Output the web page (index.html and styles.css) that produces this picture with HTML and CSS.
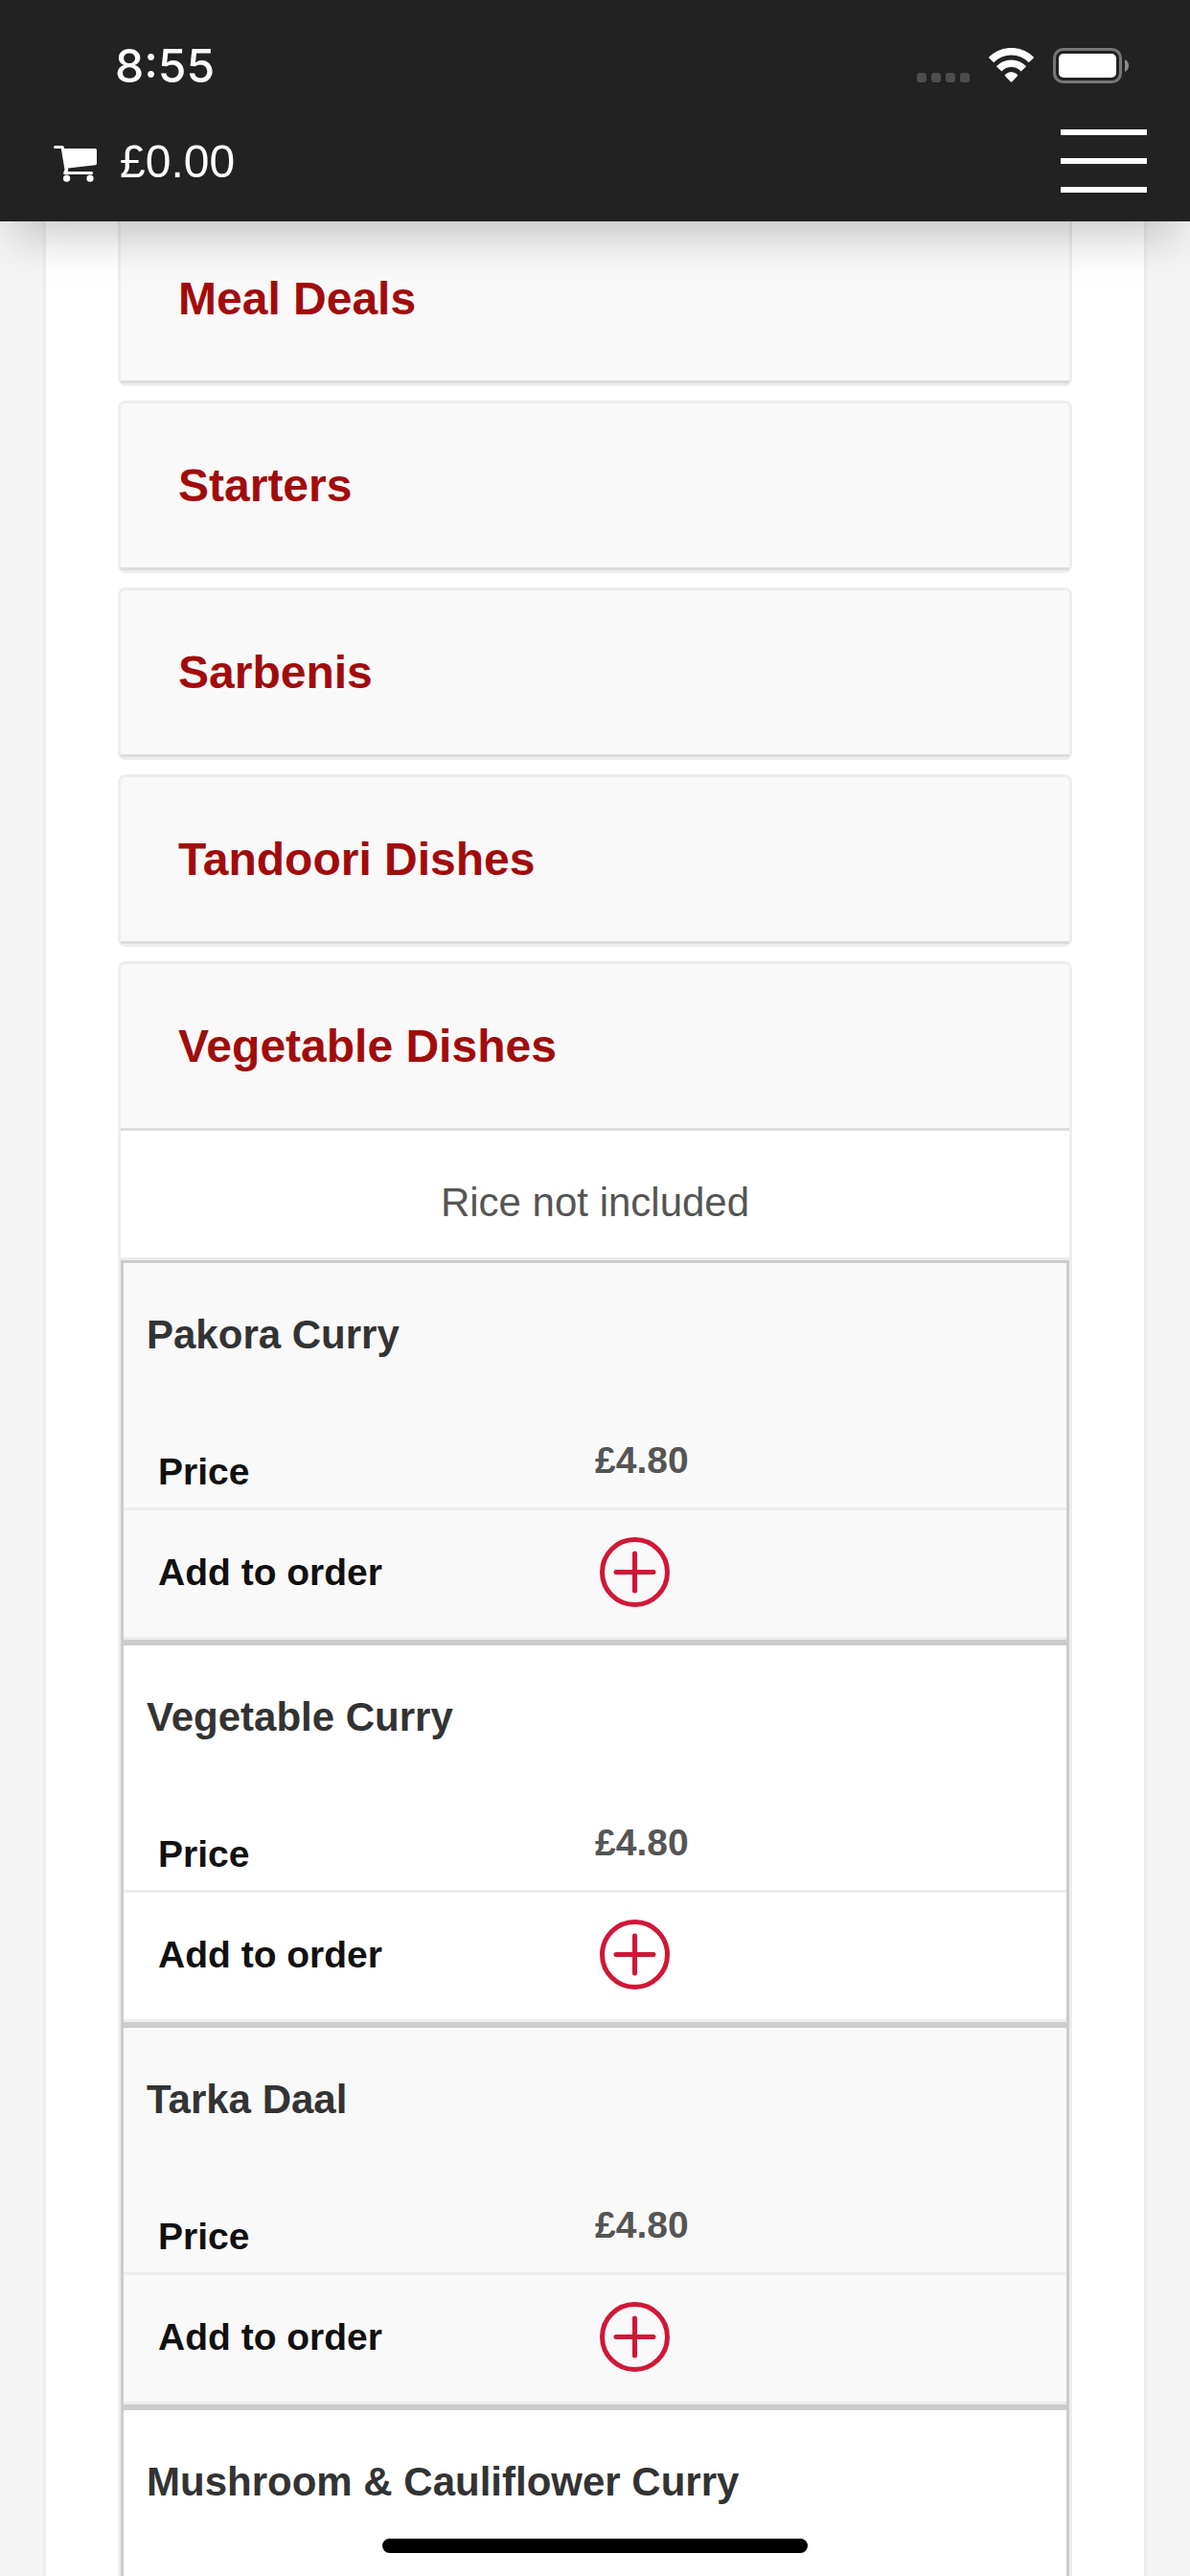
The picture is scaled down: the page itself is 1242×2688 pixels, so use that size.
FILE: index.html
```html
<!DOCTYPE html>
<html lang="en">
<head>
  <meta charset="UTF-8">
  <meta name="viewport" content="width=device-width, initial-scale=1.0">
  <title>Order Online</title>
  <link rel="stylesheet" href="styles.css">
</head>
<body>
  <header class="header">
    <div class="status">
      <span class="time">8:55</span>
      <div class="status-icons">
        <svg width="55" height="11" viewBox="0 0 55 11" fill="#4d4d4d">
          <rect width="10" height="10" rx="3"/>
          <rect x="15" width="10" height="10" rx="3"/>
          <rect x="30" width="10" height="10" rx="3"/>
          <rect x="45" width="10" height="10" rx="3"/>
        </svg>
        <svg width="47" height="37" viewBox="0 0 47 37" fill="none" stroke="#fff" stroke-width="7.6">
          <path d="M2.5 12.7A29 29 0 0 1 44.5 12.7"/>
          <path d="M10.6 21.9A17.6 17.6 0 0 1 36.4 21.9"/>
          <path d="M17.2 29.4Q16.2 28.4 17.3 27.5Q23.5 22.3 29.7 27.5Q30.8 28.4 29.8 29.4L24.3 35.3Q23.5 36 22.7 35.3Z" fill="#fff" stroke="none"/>
        </svg>
        <svg width="79" height="37" viewBox="0 0 79 37">
          <rect x="1.5" y="1.5" width="69" height="34" rx="9" fill="none" stroke="#767676" stroke-width="3"/>
          <rect x="6" y="6" width="60" height="25" rx="5" fill="#fff"/>
          <path d="M75 12Q79 14 79 18.5Q79 23 75 25Z" fill="#8a8a8a"/>
        </svg>
      </div>
    </div>
    <nav class="nav">
      <a class="cart" href="#cart">
        <svg width="45" height="44" viewBox="0 -6 45 44" fill="#fff">
          <path d="M1.5 0H9Q10.7 0 10.9 1.7L11.1 3H43.5Q45 3 45 4.5V18.5Q45 20 43.5 20.2L15 23.4L15.3 25Q15.3 26 14.6 27H40Q41 27 41 28.5Q41 30 40 30H11.5Q9.8 30 10.2 28.5L11.5 25L7.8 3H1.5Q0 3 0 1.5Q0 0 1.5 0Z"/>
          <circle cx="13.6" cy="34.2" r="3.6"/>
          <circle cx="38" cy="34.2" r="3.6"/>
        </svg>
        <span>£0.00</span>
      </a>
      <button class="menu-button" type="button" aria-label="Menu">
        <span></span>
        <span></span>
        <span></span>
      </button>
    </nav>
  </header>

  <main class="content">
    <section class="category">
      <h2>Meal Deals</h2>
    </section>
    <section class="category">
      <h2>Starters</h2>
    </section>
    <section class="category">
      <h2>Sarbenis</h2>
    </section>
    <section class="category">
      <h2>Tandoori Dishes</h2>
    </section>
    <section class="category open">
      <h2>Vegetable Dishes</h2>
      <p class="note">Rice not included</p>
      <article class="item">
        <h3>Pakora Curry</h3>
        <table>
          <tr class="price">
            <th scope="row">Price</th>
            <td>£4.80</td>
          </tr>
          <tr class="add">
            <th scope="row">Add to order</th>
            <td>
              <button type="button" class="add-button" aria-label="Add Pakora Curry">
                <svg width="73" height="73" viewBox="0 0 73 73"><circle cx="36.5" cy="36.5" r="34"/><path d="M17 36.5H56M36.5 17V56"/></svg>
              </button>
            </td>
          </tr>
        </table>
      </article>
      <article class="item">
        <h3>Vegetable Curry</h3>
        <table>
          <tr class="price">
            <th scope="row">Price</th>
            <td>£4.80</td>
          </tr>
          <tr class="add">
            <th scope="row">Add to order</th>
            <td>
              <button type="button" class="add-button" aria-label="Add Vegetable Curry">
                <svg width="73" height="73" viewBox="0 0 73 73"><circle cx="36.5" cy="36.5" r="34"/><path d="M17 36.5H56M36.5 17V56"/></svg>
              </button>
            </td>
          </tr>
        </table>
      </article>
      <article class="item">
        <h3>Tarka Daal</h3>
        <table>
          <tr class="price">
            <th scope="row">Price</th>
            <td>£4.80</td>
          </tr>
          <tr class="add">
            <th scope="row">Add to order</th>
            <td>
              <button type="button" class="add-button" aria-label="Add Tarka Daal">
                <svg width="73" height="73" viewBox="0 0 73 73"><circle cx="36.5" cy="36.5" r="34"/><path d="M17 36.5H56M36.5 17V56"/></svg>
              </button>
            </td>
          </tr>
        </table>
      </article>
      <article class="item last">
        <h3>Mushroom &amp; Cauliflower Curry</h3>
      </article>
    </section>
  </main>

  <div class="home-bar"></div>
</body>
</html>
```
FILE: styles.css
```css
* {
  box-sizing: border-box;
}
body {
  margin: 0;
  min-height: 100vh;
  display: flex;
  flex-direction: column;
  background-color: #f4f4f4;
  font-family: "Helvetica Neue", "Liberation Sans", Arial, sans-serif;
  color: #555;
}
h2, h3, p {
  margin: 0;
}

/* header */
.header {
  position: fixed;
  top: 0;
  left: 0;
  right: 0;
  z-index: 10;
  background-color: #222;
  color: #fff;
  box-shadow: 0 30px 45px -15px rgba(0, 0, 0, 0.22);
}
.status {
  height: 105px;
  padding: 32px 64px 0 120px;
  display: flex;
  justify-content: space-between;
  align-items: center;
}
.time {
  font-family: Inter, sans-serif;
  font-size: 48px;
  font-weight: 500;
}
.status-icons {
  display: flex;
  align-items: flex-end;
  gap: 20px;
}
.nav {
  height: 126px;
  padding: 0 45px 0 56px;
  display: flex;
  justify-content: space-between;
  align-items: center;
}
.cart {
  display: flex;
  align-items: center;
  gap: 24px;
  color: #fff;
  font-size: 48px;
  text-decoration: none;
}
.menu-button {
  width: 90px;
  padding: 0;
  border: none;
  background: none;
  display: flex;
  flex-direction: column;
  gap: 24px;
  cursor: pointer;
}
.menu-button span {
  width: 100%;
  height: 6px;
  background-color: #fff;
}

/* menu */
.content {
  flex: 1;
  margin: 0 45px;
  padding: 223px 75px 0;
  display: flex;
  flex-direction: column;
  gap: 15px;
  background-color: #fff;
  border: solid #ededed;
  border-width: 0 3px;
}
.category {
  border: 3px solid #ededed;
  border-radius: 8px;
}
.category h2 {
  padding: 57px 60px;
  background-color: #f9f9f9;
  border-bottom: 3px solid #ddd;
  border-radius: 5px 5px 0 0;
  color: #a10c0c;
  font-size: 48px;
  line-height: 57px;
}
.category.open {
  flex: 1;
  display: flex;
  flex-direction: column;
  border-bottom: none;
  border-radius: 8px 8px 0 0;
}
.note {
  padding: 45px 24px 27px;
  border-bottom: 3px solid #ededed;
  font-size: 42px;
  line-height: 60px;
  text-align: center;
}
.item {
  border: 3px solid #ccc;
}
.item:nth-of-type(odd) {
  background-color: #f9f9f9;
}
.item.last {
  flex: 1;
  border-bottom: none;
}
.item h3 {
  padding: 45px 24px;
  color: #333;
  font-size: 42px;
  line-height: 60px;
}
.item table {
  width: 100%;
  table-layout: fixed;
  border-spacing: 0;
  font-size: 39px;
  line-height: 45px;
}
.item th,
.item td {
  padding: 0;
  border-bottom: 3px solid #ededed;
  font-weight: bold;
  text-align: left;
}
.item th {
  padding-left: 36px;
  color: #111;
}
.item .price th,
.item .price td {
  height: 108px;
}
.item .price th {
  padding-top: 30px;
}
.item .price td {
  padding-top: 6px;
}
.item .add th,
.item .add td {
  height: 135px;
  padding-bottom: 3px;
}
.add-button {
  display: block;
  padding: 0 5px;
  border: none;
  background: none;
  cursor: pointer;
}
.add-button svg {
  display: block;
  fill: none;
  stroke: #d01737;
  stroke-width: 5;
  stroke-linecap: round;
}

/* phone home indicator */
.home-bar {
  position: fixed;
  left: 50%;
  bottom: 24px;
  z-index: 10;
  width: 444px;
  height: 15px;
  margin-left: -222px;
  background-color: #000;
  border-radius: 8px;
}
```
